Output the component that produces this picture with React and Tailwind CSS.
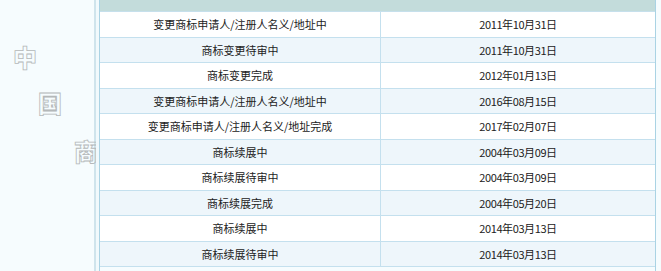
import React from 'react';

const ROWS = [
  ['变更商标申请人/注册人名义/地址中', '2011年10月31日'],
  ['商标变更待审中', '2011年10月31日'],
  ['商标变更完成', '2012年01月13日'],
  ['变更商标申请人/注册人名义/地址中', '2016年08月15日'],
  ['变更商标申请人/注册人名义/地址完成', '2017年02月07日'],
  ['商标续展中', '2004年03月09日'],
  ['商标续展待审中', '2004年03月09日'],
  ['商标续展完成', '2004年05月20日'],
  ['商标续展中', '2014年03月13日'],
  ['商标续展待审中', '2014年03月13日'],
];

// hollow grey watermark glyphs
const outline = 'text-[24px] leading-none font-black text-transparent [-webkit-text-stroke:0.8px_#b4b8b9] font-["Noto_Sans_CJK_SC",sans-serif]';

export default function App() {
  return (
    <div className="w-[661px] h-[271px] flex bg-[#f6fcfe] overflow-hidden">
      <div className="w-[96px] shrink-0 flex flex-col pt-[45px] border-r-2 border-[#cfe4ec]">
        <span className={`${outline} ml-[13px]`}>中</span>
        <span className={`${outline} ml-[38px] mt-[22px]`}>国</span>
        <span className={`${outline} ml-[74px] mt-[24px]`}>商</span>
      </div>

      <div className="w-[3px] shrink-0 bg-[#f1f9fc]" />

      <div className="w-[557px] shrink-0 border-l border-r border-[#aad3e4] font-['Noto_Sans_CJK_SC',sans-serif] text-[11px] text-[#222]">
        <div className="h-[12px] bg-[#c3dcdb] border-b border-[#c6e0ec]" />
        {ROWS.map(([status, date], i) => (
          <div
            key={i}
            className={`flex h-[25.5px] border-b border-[#c4e0ee] ${i % 2 ? 'bg-[#eef6fb]' : 'bg-white'}`}
          >
            <div className="w-[281px] flex items-center justify-center border-r border-[#c4e0ee]">{status}</div>
            <div className="flex-1 flex items-center justify-center tracking-[-0.4px]">{date}</div>
          </div>
        ))}
      </div>
    </div>
  );
}
